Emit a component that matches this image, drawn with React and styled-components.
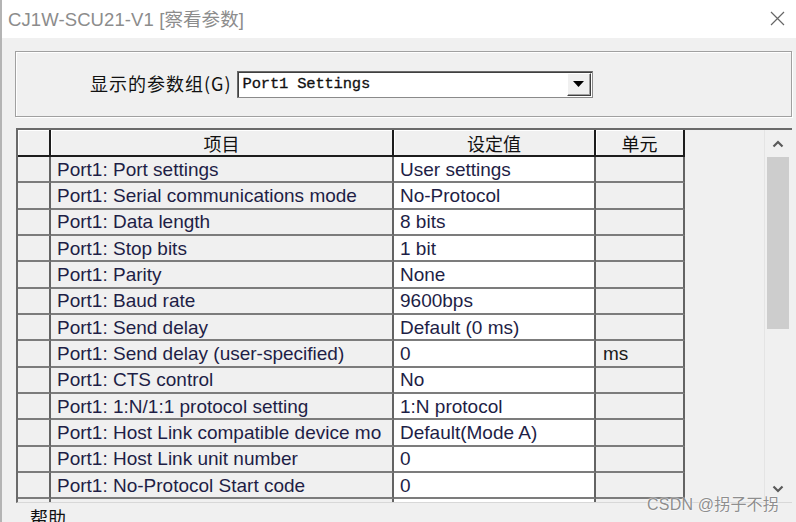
import React from "react";
import styled, { createGlobalStyle } from "styled-components";

const Global = createGlobalStyle`
  html, body { margin: 0; padding: 0; background: #fff; }
  body { width: 796px; height: 522px; overflow: hidden; }
`;

const Window = styled.div`
  position: relative;
  width: 796px;
  height: 522px;
  overflow: hidden;
  box-sizing: border-box;
  border-left: 2px solid #b4b4b4;
  display: flex;
  flex-direction: column;
  font-family: "Liberation Sans", "Noto Sans CJK SC", sans-serif;
`;

const TitleBar = styled.div`
  height: 38px;
  flex: none;
  background: #fff;
  display: flex;
  align-items: center;
  justify-content: space-between;
  padding: 0 11px 2px 6px;
  box-sizing: border-box;
`;

const Title = styled.div`
  font-family: "Liberation Sans", "Noto Sans CJK SC", sans-serif;
  font-size: 18.5px;
  color: #8c8c8c;
  letter-spacing: 0.1px;
`;

const Body = styled.div`
  flex: 1;
  background: #f0f0f0;
  padding: 13px 4px 0 13px;
  display: flex;
  flex-direction: column;
  min-height: 0;
`;

const GroupBox = styled.div`
  height: 66px;
  flex: none;
  box-sizing: border-box;
  border: 1px solid #a0a0a0;
  box-shadow: inset 1px 1px 0 #fff, 1px 1px 0 #fff;
  display: flex;
  align-items: center;
  padding: 0 0 0 74px;
  gap: 5px;
`;

const Label = styled.div`
  font-family: "Noto Sans CJK SC", sans-serif;
  font-size: 18px;
  color: #111;
  letter-spacing: 1px;
  margin-top: -2px;
`;

const Combo = styled.div`
  width: 356px;
  height: 27px;
  box-sizing: border-box;
  border: 1px solid #8a8a8a;
  border-top-color: #6a6a6a;
  border-left-color: #6a6a6a;
  box-shadow: inset 1px 1px 0 #404040;
  background: #fff;
  display: flex;
  align-items: center;
  justify-content: space-between;
  padding: 1px 1px 1px 5px;
`;

const ComboText = styled.span`
  font-family: "Liberation Mono", monospace;
  font-size: 15.5px;
  color: #111;
  letter-spacing: -0.2px;
  -webkit-text-stroke: 0.3px #111;
`;

const DropButton = styled.div`
  width: 24px;
  height: 23px;
  box-sizing: border-box;
  background: #f0f0f0;
  border: 1px solid;
  border-color: #fff #404040 #404040 #fff;
  box-shadow: inset -1px -1px 0 #a0a0a0;
  display: flex;
  align-items: center;
  justify-content: center;
`;

const Frame = styled.div`
  margin-top: 11px;
  height: 375px;
  flex: none;
  box-sizing: border-box;
  border-top: 2px solid #6a6a6a;
  border-left: 2px solid #6a6a6a;
  border-bottom: 1px solid #d8d8d8;
  margin-left: 1px;
  display: flex;
`;

const TableArea = styled.div`
  flex: 1;
  overflow: hidden;
  display: flex;
  align-items: flex-start;
`;

const Grid = styled.div`
  display: grid;
  grid-template-columns: 33px 343px 202px 89px;
  grid-template-rows: 27px;
  grid-auto-rows: 26.33px;
`;

const HeadCell = styled.div`
  box-sizing: border-box;
  background: #f0f0f0;
  border-right: 2px solid #1c1c1c;
  border-bottom: 2px solid #1c1c1c;
  box-shadow: inset 1px 1px 0 #fff;
  font-family: "Noto Sans CJK SC", sans-serif;
  font-size: 18px;
  color: #111;
  display: flex;
  align-items: center;
  justify-content: center;
  line-height: 1;
  padding-top: 1px;
`;

const Cell = styled.div`
  box-sizing: border-box;
  background: ${(p) => (p.$white ? "#fff" : "#f0f0f0")};
  border-right: 2px solid #646464;
  border-bottom: 2px solid #7c7c7c;
  font-family: "Liberation Sans", sans-serif;
  font-size: 19px;
  color: ${(p) => (p.$plain ? "#1a1a1a" : "#1e1e46")};
  display: flex;
  align-items: center;
  padding-left: ${(p) => (p.$pad ? p.$pad : 6)}px;
  white-space: nowrap;
  overflow: hidden;
  line-height: 1;
`;

const ScrollBar = styled.div`
  width: 28px;
  flex: none;
  box-sizing: border-box;
  border-left: 1px solid #e4e4e4;
  background: #f0f0f0;
  display: flex;
  flex-direction: column;
  align-items: center;
  padding: 0 2px 0 1px;
`;

const ArrowBox = styled.div`
  height: 27px;
  width: 100%;
  display: flex;
  align-items: center;
  justify-content: center;
  flex: none;
`;

const Thumb = styled.div`
  width: 22px;
  height: 172px;
  background: #cdcdcd;
  flex: none;
`;

const Spacer = styled.div`
  flex: 1;
`;

const Help = styled.div`
  font-family: "Noto Sans CJK SC", sans-serif;
  font-size: 18px;
  color: #111;
  margin: 5px 0 0 15px;
  line-height: 1;
`;

const Watermark = styled.div`
  position: absolute;
  left: 645px;
  top: 491px;
  font-family: "Liberation Sans", "Noto Sans CJK SC", sans-serif;
  font-size: 16px;
  color: #8e8e8e;
  text-shadow: 0 0 2px #fff, 0 0 1px #fff;
  letter-spacing: 0.2px;
`;

const rows = [
  ["Port1: Port settings", "User settings", ""],
  ["Port1: Serial communications mode", "No-Protocol", ""],
  ["Port1: Data length", "8 bits", ""],
  ["Port1: Stop bits", "1 bit", ""],
  ["Port1: Parity", "None", ""],
  ["Port1: Baud rate", "9600bps", ""],
  ["Port1: Send delay", "Default (0 ms)", ""],
  ["Port1: Send delay (user-specified)", "0", "ms"],
  ["Port1: CTS control", "No", ""],
  ["Port1: 1:N/1:1 protocol setting", "1:N protocol", ""],
  ["Port1: Host Link compatible device mo", "Default(Mode A)", ""],
  ["Port1: Host Link unit number", "0", ""],
  ["Port1: No-Protocol Start code", "0", ""],
  ["", "", ""],
];

const Chevron = ({ up }) => (
  <svg width="12" height="8" viewBox="0 0 12 8">
    <polyline
      points={up ? "1.5,6.5 6,2 10.5,6.5" : "1.5,1.5 6,6 10.5,1.5"}
      fill="none"
      stroke="#5a5a5a"
      strokeWidth="2.2"
    />
  </svg>
);

export default function App() {
  return (
    <>
      <Global />
      <Window>
        <TitleBar>
          <Title>CJ1W-SCU21-V1 [察看参数]</Title>
          <svg width="15" height="15" viewBox="0 0 15 15">
            <path d="M1 1 L14 14 M14 1 L1 14" stroke="#666" strokeWidth="1.2" />
          </svg>
        </TitleBar>
        <Body>
          <GroupBox>
            <Label>显示的参数组(G)</Label>
            <Combo>
              <ComboText>Port1 Settings</ComboText>
              <DropButton>
                <svg width="11" height="6" viewBox="0 0 11 6">
                  <polygon points="0,0 11,0 5.5,6" fill="#000" />
                </svg>
              </DropButton>
            </Combo>
          </GroupBox>
          <Frame>
            <TableArea>
              <Grid>
                <HeadCell />
                <HeadCell>项目</HeadCell>
                <HeadCell>设定值</HeadCell>
                <HeadCell>单元</HeadCell>
                {rows.map(([name, value, unit], i) => (
                  <React.Fragment key={i}>
                    <Cell />
                    <Cell>{name}</Cell>
                    <Cell $white $pad={6}>{value}</Cell>
                    <Cell $plain $pad={7}>{unit}</Cell>
                  </React.Fragment>
                ))}
              </Grid>
            </TableArea>
            <ScrollBar>
              <ArrowBox>
                <Chevron up />
              </ArrowBox>
              <Thumb />
              <Spacer />
              <ArrowBox>
                <Chevron />
              </ArrowBox>
            </ScrollBar>
          </Frame>
          <Help>帮助</Help>
        </Body>
        <Watermark>CSDN @拐子不拐</Watermark>
      </Window>
    </>
  );
}
